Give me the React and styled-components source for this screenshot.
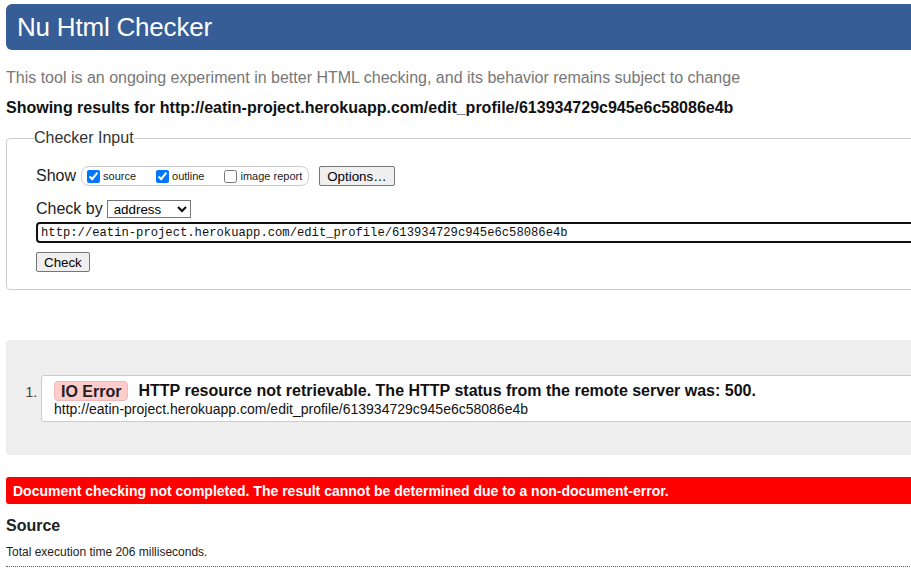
import React from 'react';
import styled, { createGlobalStyle } from 'styled-components';

const GlobalStyle = createGlobalStyle`
  html, body {
    margin: 0;
    padding: 0;
    background: #fff;
    overflow: hidden;
  }
  body {
    font-family: "Liberation Sans", Arial, sans-serif;
    color: #222;
  }
`;

const Page = styled.div`
  width: 960px;
  padding: 4px 0 0 6px;
`;

const Header = styled.h1`
  margin: 0;
  height: 46px;
  display: flex;
  align-items: center;
  padding-left: 11px;
  background: #365d95;
  border-radius: 6px;
  color: #fff;
  font-size: 26px;
  font-weight: normal;
  letter-spacing: -0.2px;
`;

const Tagline = styled.p`
  margin: 19px 0 0;
  font-size: 16px;
  line-height: 18px;
  color: #777;
`;

const Showing = styled.p`
  margin: 12px 0 0;
  font-size: 16px;
  line-height: 18px;
  font-weight: bold;
  color: #111;
`;

const Fieldset = styled.fieldset`
  margin: 12px 0 0;
  padding: 19px 0 17px 29px;
  border: 1px solid #ccc;
  border-radius: 4px;
  min-inline-size: 0;
`;

const Legend = styled.legend`
  margin-left: -2px;
  padding: 0;
  font-size: 16px;
  line-height: 18px;
  color: #333;
`;

const Row = styled.div`
  display: flex;
  align-items: center;
  height: ${p => p.h || 20}px;
  margin-top: ${p => p.mt || 0}px;
  font-size: 16px;
`;

const Label = styled.span`
  color: #222;
  margin-right: ${p => p.mr || 4}px;
`;

const CheckGroup = styled.div`
  display: flex;
  align-items: center;
  height: 18px;
  padding: 0 6px 0 5px;
  border: 1px solid #ccc;
  border-radius: 8px;
  margin-right: 10px;
`;

const CheckItem = styled.label`
  display: flex;
  align-items: center;
  font-size: 11px;
  color: #222;
  margin-right: ${p => p.mr || 0}px;

  input {
    margin: 0 3px 0 0;
    width: 13px;
    height: 13px;
    accent-color: #0075ff;
  }
`;

const Button = styled.button`
  height: 20px;
  padding: 0 ${p => p.px || 7}px;
  font-family: "Liberation Sans", Arial, sans-serif;
  font-size: 13.33px;
  color: #000;
  background: #efefef;
  border: 1px solid #767676;
  border-radius: 2px;
`;

const Select = styled.select`
  height: 18px;
  width: 84px;
  padding: 0 0 0 2px;
  font-family: "Liberation Sans", Arial, sans-serif;
  font-size: 13.33px;
  color: #000;
  background: #fff;
  border: 1px solid #767676;
  border-radius: 0;
`;

const UrlInput = styled.input`
  display: block;
  box-sizing: border-box;
  margin-top: 4px;
  width: 1000px;
  height: 21px;
  padding: 0 0 0 3px;
  border: 2px solid #101010;
  border-radius: 4px;
  outline: none;
  font-family: "Liberation Mono", "Courier New", monospace;
  font-size: 12.2px;
  color: #111;
`;

const Results = styled.div`
  margin-top: 50px;
  padding: 35px 0 33px;
  background: #eee;
  border-radius: 4px;
`;

const List = styled.ol`
  margin: 0;
  padding-left: 35px;
  font-size: 13px;
  color: #333;
`;

const Message = styled.li`
  box-sizing: border-box;
  height: 47px;
  padding: 5px 0 0 12px;
  background: #fff;
  border: 1px solid #ccc;
  border-radius: 3px;

  &::marker {
    font-size: 14px;
    color: #444;
  }
`;

const MessageLine = styled.p`
  margin: 0;
  display: flex;
  align-items: center;
  font-size: 16px;
  font-weight: bold;
  color: #111;
`;

const Pill = styled.strong`
  display: inline-block;
  height: 20px;
  line-height: 20px;
  padding: 0 6px;
  margin-right: 10px;
  background: #fcc;
  border: 1px solid #f2b8b8;
  border-radius: 4px;
  box-sizing: border-box;
  color: #222;
`;

const Location = styled.p`
  margin: 0;
  font-size: 14px;
  line-height: 16px;
  color: #111;
`;

const FailureBar = styled.p`
  margin: 22px 0 0;
  height: 27px;
  display: flex;
  align-items: center;
  padding-left: 7px;
  background: #f00;
  border-radius: 3px;
  color: #fff;
  font-size: 14px;
  font-weight: bold;
`;

const SectionTitle = styled.h2`
  margin: 13px 0 0;
  font-size: 16px;
  line-height: 18px;
  font-weight: bold;
  color: #222;
`;

const Timing = styled.p`
  margin: 10px 0 0;
  padding-bottom: 7px;
  font-size: 12px;
  line-height: 14px;
  color: #222;
  border-bottom: 1px dotted #666;
`;

const url = 'http://eatin-project.herokuapp.com/edit_profile/613934729c945e6c58086e4b';

export default function App() {
  return (
    <Page>
      <GlobalStyle />
      <Header>Nu Html Checker</Header>
      <Tagline>
        This tool is an ongoing experiment in better HTML checking, and its behavior remains subject to change
      </Tagline>
      <Showing>Showing results for {url}</Showing>

      <Fieldset>
        <Legend>Checker Input</Legend>
        <Row>
          <Label mr={5}>Show</Label>
          <CheckGroup>
            <CheckItem mr={20}>
              <input type="checkbox" defaultChecked />
              source
            </CheckItem>
            <CheckItem mr={20}>
              <input type="checkbox" defaultChecked />
              outline
            </CheckItem>
            <CheckItem>
              <input type="checkbox" />
              image report
            </CheckItem>
          </CheckGroup>
          <Button px={7}>Options…</Button>
        </Row>
        <Row h={19} mt={13}>
          <Label mr={4}>Check by</Label>
          <Select defaultValue="address">
            <option value="address">address</option>
            <option value="file">file upload</option>
            <option value="text">text input</option>
          </Select>
        </Row>
        <UrlInput type="url" defaultValue={url} />
        <Row mt={9}>
          <Button px={7}>Check</Button>
        </Row>
      </Fieldset>

      <Results>
        <List>
          <Message>
            <MessageLine>
              <Pill>IO Error</Pill>
              HTTP resource not retrievable. The HTTP status from the remote server was: 500.
            </MessageLine>
            <Location>{url}</Location>
          </Message>
        </List>
      </Results>

      <FailureBar>
        Document checking not completed. The result cannot be determined due to a non-document-error.
      </FailureBar>
      <SectionTitle>Source</SectionTitle>
      <Timing>Total execution time 206 milliseconds.</Timing>
    </Page>
  );
}
